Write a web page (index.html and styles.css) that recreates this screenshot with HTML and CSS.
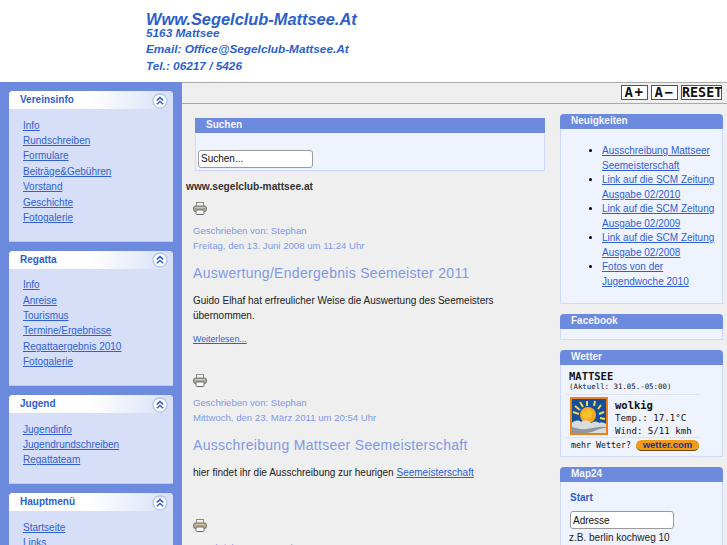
FILE: index.html
```html
<!DOCTYPE html>
<html lang="de">
<head>
<meta charset="utf-8">
<title>Www.Segelclub-Mattsee.At</title>
<link rel="stylesheet" href="styles.css">
</head>
<body>
<svg class="defs" width="0" height="0" aria-hidden="true">
  <symbol id="chev" viewBox="0 0 16 16">
    <circle cx="8" cy="8" r="7" fill="#fff" stroke="#b9c7ee" stroke-width="1.4"/>
    <path d="M4.8 7.4 8 4.6l3.2 2.8M4.8 11.2 8 8.4l3.2 2.8" fill="none" stroke="#2f5fd0" stroke-width="1.5"/>
  </symbol>
  <symbol id="printer" viewBox="0 0 14 13">
    <rect x="3.5" y="0.5" width="7" height="4" fill="#f4f4f4" stroke="#8a8a8a"/>
    <rect x="0.5" y="4" width="13" height="5.5" rx="2" fill="#a9a69c" stroke="#77756e"/>
    <rect x="2" y="5" width="10" height="1" fill="#d9c58c"/>
    <rect x="3" y="8" width="8" height="4.5" rx="1" fill="#fff" stroke="#6d6d6d"/>
  </symbol>
</svg>
<header class="site-head">
  <h1>Www.Segelclub-Mattsee.At</h1>
  <p>5163 Mattsee</p>
  <p>Email: Office@Segelclub-Mattsee.At</p>
  <p>Tel.: 06217 / 5426</p>
</header>
<div class="layout">
  <aside class="left">
    <section class="menu">
      <div class="menu-head"><h3>Vereinsinfo</h3><svg class="chev"><use href="#chev"/></svg></div>
      <ul>
        <li><a href="#">Info</a></li>
        <li><a href="#">Rundschreiben</a></li>
        <li><a href="#">Formulare</a></li>
        <li><a href="#">Beiträge&amp;Gebühren</a></li>
        <li><a href="#">Vorstand</a></li>
        <li><a href="#">Geschichte</a></li>
        <li><a href="#">Fotogalerie</a></li>
      </ul>
    </section>
    <section class="menu">
      <div class="menu-head"><h3>Regatta</h3><svg class="chev"><use href="#chev"/></svg></div>
      <ul>
        <li><a href="#">Info</a></li>
        <li><a href="#">Anreise</a></li>
        <li><a href="#">Tourismus</a></li>
        <li><a href="#">Termine/Ergebnisse</a></li>
        <li><a href="#">Regattaergebnis 2010</a></li>
        <li><a href="#">Fotogalerie</a></li>
      </ul>
    </section>
    <section class="menu">
      <div class="menu-head"><h3>Jugend</h3><svg class="chev"><use href="#chev"/></svg></div>
      <ul>
        <li><a href="#">Jugendinfo</a></li>
        <li><a href="#">Jugendrundschreiben</a></li>
        <li><a href="#">Regattateam</a></li>
      </ul>
    </section>
    <section class="menu">
      <div class="menu-head"><h3>Hauptmenü</h3><svg class="chev"><use href="#chev"/></svg></div>
      <ul>
        <li><a href="#">Startseite</a></li>
        <li><a href="#">Links</a></li>
      </ul>
    </section>
  </aside>
  <div class="main">
    <div class="toolbar">
      <button class="fs fs-a">A+</button>
      <button class="fs fs-a">A−</button>
      <button class="fs fs-r">RESET</button>
    </div>
    <div class="columns">
      <main class="center">
        <section class="search">
          <h4>Suchen</h4>
          <div class="search-body"><input class="field search-field" type="text" value="Suchen..."></div>
        </section>
        <div class="site-name">www.segelclub-mattsee.at</div>
        <article class="post">
          <svg class="printer"><use href="#printer"/></svg>
          <p class="meta">Geschrieben von: Stephan</p>
          <p class="meta">Freitag, den 13. Juni 2008 um 11:24 Uhr</p>
          <h2>Auswertung/Endergebnis Seemeister 2011</h2>
          <p class="text">Guido Elhaf hat erfreulicher Weise die Auswertung des Seemeisters übernommen.</p>
          <a class="more" href="#">Weiterlesen...</a>
        </article>
        <article class="post second">
          <svg class="printer"><use href="#printer"/></svg>
          <p class="meta">Geschrieben von: Stephan</p>
          <p class="meta">Mittwoch, den 23. März 2011 um 20:54 Uhr</p>
          <h2>Ausschreibung Mattseer Seemeisterschaft</h2>
          <p class="text">hier findet ihr die Ausschreibung zur heurigen <a href="#">Seemeisterschaft</a></p>
        </article>
        <article class="post third">
          <svg class="printer"><use href="#printer"/></svg>
          <p class="meta">Geschrieben von: Stephan</p>
        </article>
      </main>
      <aside class="right">
        <section class="box">
          <h4>Neuigkeiten</h4>
          <div class="box-body news">
            <ul>
              <li><a href="#">Ausschreibung Mattseer Seemeisterschaft</a></li>
              <li><a href="#">Link auf die SCM Zeitung Ausgabe 02/2010</a></li>
              <li><a href="#">Link auf die SCM Zeitung Ausgabe 02/2009</a></li>
              <li><a href="#">Link auf die SCM Zeitung Ausgabe 02/2008</a></li>
              <li><a href="#">Fotos von der Jugendwoche 2010</a></li>
            </ul>
          </div>
        </section>
        <section class="box">
          <h4>Facebook</h4>
          <div class="box-body fb"></div>
        </section>
        <section class="box">
          <h4>Wetter</h4>
          <div class="box-body weather">
            <div class="w-place">MATTSEE</div>
            <div class="w-time">(Aktuell: 31.05.-05:00)</div>
            <div class="w-main">
              <svg class="w-icon" viewBox="0 0 38 38">
                <rect x="1" y="1" width="36" height="36" fill="#14509a" stroke="#f08010" stroke-width="2"/>
                <g stroke="#f5d25a" stroke-width="2">
                  <path d="M17 4v5M10 5l3 5M5 9l5 4M3 15l6 2M25 4l-1 5M31 8l-3 4M34 15l-5 2M35 22l-5-1"/>
                </g>
                <circle cx="18" cy="18" r="8" fill="#f7a81c"/>
                <circle cx="17" cy="17" r="5" fill="#fbc02d"/>
                <path d="M2 36V26c3-3 7-3 9-1 3-3 8-2 10 1 3-2 6-2 8 0 3-1 6 0 7 1v9z" fill="#d9dcdf"/>
                <path d="M2 30c5 1 9 3 14 2 6 0 12-3 20-2v1c-8 0-13 5-20 5H2z" fill="#8f969f"/>
              </svg>
              <div class="w-data">
                <div class="w-cond">wolkig</div>
                <div class="w-line">Temp.: 17.1°C</div>
                <div class="w-line">Wind: S/11 kmh</div>
              </div>
            </div>
            <div class="w-more"><span>mehr Wetter?</span><span class="w-logo">wetter.com</span></div>
          </div>
        </section>
        <section class="box">
          <h4>Map24</h4>
          <div class="box-body map">
            <div class="map-title">Start</div>
            <input class="field map-field" type="text" value="Adresse">
            <div class="map-hint">z.B. berlin kochweg 10</div>
          </div>
        </section>
      </aside>
    </div>
  </div>
</div>
</body>
</html>
```
FILE: styles.css
```css
* { box-sizing: border-box; }
html, body { margin: 0; height: 545px; overflow: hidden; }
body { font-family: "Liberation Sans", Arial, sans-serif; font-size: 10px; color: #222; background: #fff; }
.defs { position: absolute; }
a { color: #2f5fd0; }

.site-head { height: 82px; padding: 11px 0 0 146px; color: #2c5fcb; font-style: italic; font-weight: bold; }
.site-head h1 { margin: 0; font-size: 16.4px; line-height: 16px; }
.site-head p { margin: 0; font-size: 11.8px; line-height: 16.5px; }
.site-head h1 + p { line-height: 12px; margin-bottom: 2px; }

.layout { display: flex; height: 463px; }
.left { width: 182px; flex: none; background: #6c8ade; padding: 9px 9px 0; overflow: hidden; }
.menu { background: #d6dff7; border-bottom: 1px solid #b9c8f2; margin-bottom: 9px; border-radius: 4px 4px 0 0; padding-bottom: 15.4px; }
.menu-head { height: 18px; display: flex; align-items: center; justify-content: space-between; padding: 0 5px 0 11px; border-radius: 4px 4px 0 0;
  background: linear-gradient(90deg, #fff 0, #fff 50%, #d6dff7 100%); }
.menu-head h3 { margin: 0 0 1px; font-size: 10px; color: #2c5fcb; }
.chev { width: 16px; height: 16px; margin-top: 1px; }
.menu ul { list-style: none; margin: 0; padding: 8.6px 0 0 14px; }
.menu li { height: 15.4px; line-height: 15.4px; font-size: 10px; }

.main { flex: 1; background: #efefef; min-width: 0; }
.toolbar { height: 22px; border-top: 1px solid #aaa; border-bottom: 1px solid #aaa; display: flex; justify-content: flex-end; align-items: flex-start; gap: 3px; padding: 2px 5px 0 0; }
.fs { height: 15px; padding: 0; background: #fff; border: 1px solid #555; outline: 0; font: bold 14px/13px "DejaVu Sans Mono", monospace; color: #111; }
.fs-a { width: 27px; letter-spacing: 1.5px; }
.fs-r { width: 41px; font-size: 13.4px; }

.columns { display: flex; padding-left: 4px; }
.center { width: 374px; flex: none; height: 441px; overflow: hidden; }
.search { margin: 14px 0 9px 9px; width: 350px; }
.search h4, .box h4 { margin: 0; background: #6c8ade; color: #f3f6ff; font-size: 10px; }
.search h4 { height: 15px; line-height: 14px; padding-left: 11px; }
.search-body { background: #eff3fe; border: 1px solid #cfdafa; border-top: 0; height: 38px; padding: 17px 0 0 2px; }
.field { font: 10px "Liberation Sans", Arial, sans-serif; color: #111; background: #fff; border: 1px solid #9a9a9a; border-radius: 3px; outline: 0; }
.search-field { width: 115px; height: 18px; padding: 0 2px 1px; display: block; }
.site-name { font-weight: bold; font-size: 10.2px; line-height: 14px; color: #333; }
.post { padding: 8px 0 0 7px; }
.post.second { padding-top: 30px; }
.post.third { padding-top: 39px; }
.printer { width: 14px; height: 13px; display: block; margin-bottom: 8px; }
.meta { margin: 0; font-size: 9.6px; line-height: 15.4px; color: #7f99e4; }
.post h2 { margin: 8px 0 0; font-size: 14px; line-height: 23px; font-weight: normal; color: #7f99e4; letter-spacing: .3px; }
.text { margin: 8px 0 0; line-height: 15px; width: 320px; font-size: 10px; color: #222; }
.more { display: block; margin-top: 11px; font-size: 8.8px; }

.right { width: 163px; flex: none; padding-top: 10px; }
.box { margin-bottom: 10px; }
.box h4 { height: 15px; line-height: 13px; padding-left: 11px; border-radius: 4px 4px 0 0; }
.box-body { background: #eff3fe; border: 1px solid #cfdafa; border-top: 0; }
.news { height: 175px; }
.news ul { margin: 0; padding: 15px 6px 0 41px; list-style: disc; color: #000; }
.news li { line-height: 14.5px; font-size: 10px; }
.fb { height: 11px; }
.weather { height: 92px; padding: 5px 0 0 5px; font-family: "DejaVu Sans Mono", monospace; color: #111; }
.w-place { font-weight: bold; font-size: 10.5px; line-height: 13px; padding-left: 3px; }
.w-time { font-size: 7.4px; line-height: 8px; padding: 0 0 3px 3px; border-bottom: 1px solid #dfe2ea; width: 134px; white-space: nowrap; }
.w-main { display: flex; align-items: flex-start; gap: 7px; height: 43px; padding: 2px 0 0 4px; width: 134px; border-bottom: 1px solid #dfe2ea; }
.w-icon { width: 38px; height: 38px; flex: none; }
.w-data { padding-top: 2px; }
.w-cond { font-weight: bold; font-size: 10.5px; line-height: 13px; }
.w-line { font-size: 9.1px; line-height: 12.5px; white-space: nowrap; }
.w-more { display: flex; align-items: center; gap: 5px; font-size: 8.3px; line-height: 13px; height: 13px; margin-top: 1px; padding-left: 5px; white-space: nowrap; }
.w-logo { background: #f39a16; border-bottom: 1px solid #6d4a10; border-radius: 7px; color: #123a8c; font: bold 9.5px/10px "Liberation Sans", Arial, sans-serif; width: 63px; text-align: center; }
.map { height: 90px; padding: 9px 0 0 9px; }
.map-title { font-weight: bold; font-size: 10px; color: #2c5fcb; line-height: 14px; }
.map-field { width: 104px; height: 18px; margin: 6px 0 0 0; padding: 0 2px; display: block; }
.map-hint { margin: 2px 0 0 -1px; line-height: 13px; font-size: 10px; color: #222; }
```
